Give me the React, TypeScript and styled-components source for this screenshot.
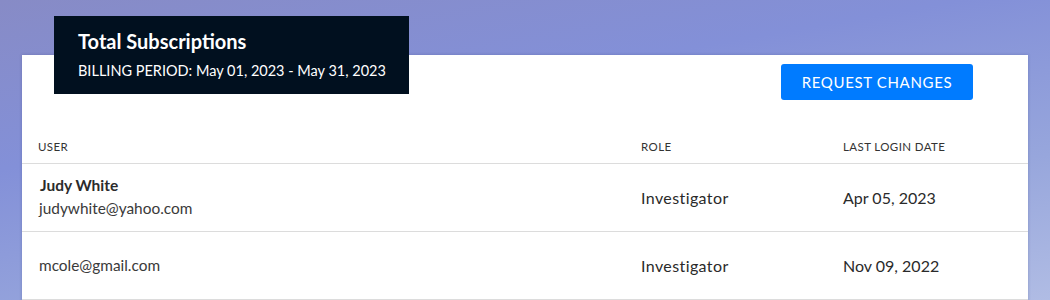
import styled, { createGlobalStyle } from "styled-components";

const GlobalStyle = createGlobalStyle`
	html, body {
		margin: 0;
		height: 100%;
	}
	body {
		font-family: Lato, "Open Sans", Arial, sans-serif;
		color: #2b2b2b;
		background: linear-gradient(170deg, #878bc6 0%, #8390d8 35%, #97a6dc 70%, #b0bce4 100%);
		overflow: hidden;
	}
`;

const Page = styled.div`
	height: 300px;
	padding: 55px 22px 0 22px;
	box-sizing: border-box;
`;

const Card = styled.section`
	position: relative;
	background: #fff;
	height: 260px;
	box-shadow: 0 0 3px rgba(40, 50, 110, 0.25);
`;

const TitleBox = styled.div`
	position: absolute;
	top: -39px;
	left: 32px;
	width: 355px;
	height: 78px;
	box-sizing: border-box;
	padding: 13px 0 0 24px;
	background: #01101f;
	color: #fff;
	white-space: nowrap;
`;

const Title = styled.h2`
	margin: 0;
	font-size: 20px;
	font-weight: 700;
	line-height: 24px;
`;

const Period = styled.p`
	margin: 9px 0 0;
	font-size: 14.5px;
	line-height: 18px;
`;

const Toolbar = styled.div`
	display: flex;
	justify-content: flex-end;
	padding: 9px 55px 0 0;
	height: 73px;
	box-sizing: border-box;
`;

const Button = styled.button`
	width: 192px;
	height: 36px;
	border: none;
	border-radius: 3px;
	background: #007bff;
	color: #fff;
	font-family: inherit;
	font-size: 15px;
	letter-spacing: 0.65px;
	text-transform: uppercase;
	cursor: pointer;
`;

const Row = styled.div<{ $head?: boolean }>`
	display: grid;
	grid-template-columns: 603px 202px 1fr;
	align-items: center;
	padding-left: 16px;
	height: ${(p) => (p.$head ? "35px" : "67px")};
	border-bottom: 1px solid #dcdcdc;
`;

const HeadCell = styled.div`
	font-size: 11.5px;
	letter-spacing: 0.4px;
	text-transform: uppercase;
	color: #333;
	padding-top: 2px;
`;

const Cell = styled.div<{ $wide?: boolean }>`
	font-size: 16px;
	color: #2a2a2a;
	letter-spacing: ${(p) => (p.$wide ? "0.4px" : "0")};
`;

const UserCell = styled.div`
	margin-top: -2px;
`;

const UserName = styled.div`
	font-size: 15.5px;
	font-weight: 700;
	margin-left: 2px;
	margin-bottom: 5px;
`;

const Email = styled.div`
	font-size: 15.4px;
	color: #3a3a3a;
	margin-left: 1px;
`;

type User = { name?: string; email: string; role: string; login: string };

const users: User[] = [
	{ name: "Judy White", email: "judywhite@yahoo.com", role: "Investigator", login: "Apr 05, 2023" },
	{ email: "mcole@gmail.com", role: "Investigator", login: "Nov 09, 2022" },
];

const App = () => (
	<>
		<GlobalStyle />
		<Page>
			<Card>
				<TitleBox>
					<Title>Total Subscriptions</Title>
					<Period>BILLING PERIOD: May 01, 2023 - May 31, 2023</Period>
				</TitleBox>
				<Toolbar>
					<Button>Request Changes</Button>
				</Toolbar>
				<Row $head>
					<HeadCell>User</HeadCell>
					<HeadCell>Role</HeadCell>
					<HeadCell>Last Login Date</HeadCell>
				</Row>
				{users.map((u) => (
					<Row key={u.email}>
						<UserCell>
							{u.name && <UserName>{u.name}</UserName>}
							<Email>{u.email}</Email>
						</UserCell>
						<Cell $wide>{u.role}</Cell>
						<Cell>{u.login}</Cell>
					</Row>
				))}
			</Card>
		</Page>
	</>
);

export default App;
